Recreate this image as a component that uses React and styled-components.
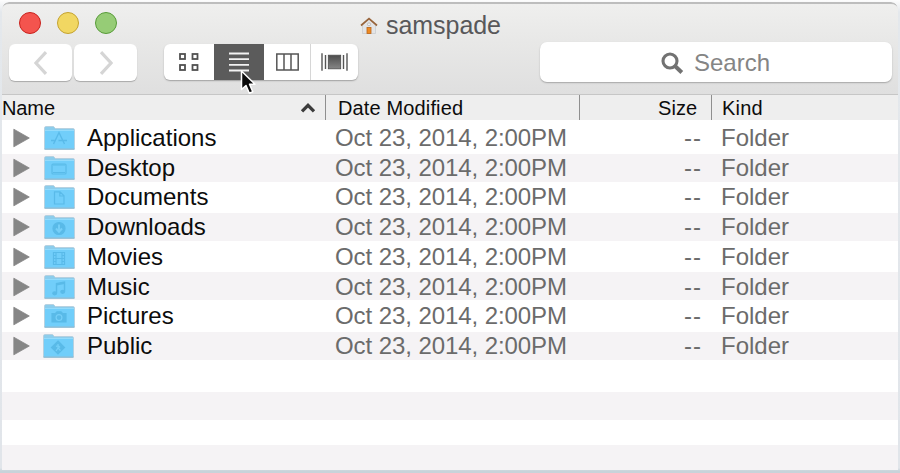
import React from 'react';
import styled, { createGlobalStyle } from 'styled-components';

const GlobalStyle = createGlobalStyle`
  * { box-sizing: border-box; }
  html, body { margin: 0; padding: 0; overflow: hidden; }
  body { background: #fff; }
  svg { display: block; flex: none; }
`;

const Page = styled.div`
  position: relative;
  width: 900px;
  height: 473px;
  padding: 2px 2px 0;
  overflow: hidden;
  background: linear-gradient(#fdfdfd 0, #e4e8ec 12px, #e1e5ea 468px, #c8d3da 471px);
  font-family: "Liberation Sans", Arial, Helvetica, sans-serif;
  color: #0c0c0c;
`;

const Window = styled.div`
  display: flex;
  flex-direction: column;
  height: 468px;
  border-radius: 7px 7px 0 0;
  overflow: hidden;
  background: #fff;
`;

const Chrome = styled.header`
  height: 93px;
  flex: none;
  border-top: 2px solid #bdbdbd;
  border-bottom: 1px solid #c6c6c6;
  border-radius: 7px 7px 0 0;
  background: linear-gradient(#efefee, #e9e9e8 35%, #dfdfdf);
`;

const TitleBar = styled.div`
  display: flex;
  height: 38px;
  padding: 8px 0 0 17px;
`;

const Lights = styled.div`
  display: flex;
  gap: 16px;
  width: 341px;
`;

const Light = styled.span`
  width: 22px;
  height: 22px;
  border-radius: 50%;
  background: ${(p) => p.$fill};
  border: 1.5px solid ${(p) => p.$edge};
`;

const Title = styled.div`
  display: flex;
  gap: 8px;
  font-size: 25px;
  line-height: 26px;
  letter-spacing: -0.05px;
  color: #58585a;
  svg { margin-top: 5px; }
`;

const Toolbar = styled.div`
  display: flex;
  align-items: flex-start;
  padding: 0 6px 0 7px;
`;

const NavButtons = styled.div`
  display: flex;
  gap: 2px;
  margin-top: 2px;
`;

const NavButton = styled.button`
  display: flex;
  align-items: center;
  justify-content: center;
  width: 63px;
  height: 37px;
  padding: 0;
  border: 0;
  border-radius: 6px;
  background: #fff;
  box-shadow: 0 1px 1px #a9a9a9;
`;

const ViewSwitch = styled.div`
  display: grid;
  grid-template-columns: 50px 50px 46px 48px;
  height: 36px;
  margin: 2px 182px 0 27px;
  border-radius: 6px;
  background: #fff;
  box-shadow: 0 1px 1.5px #a0a0a0;
`;

const ViewButton = styled.button`
  display: flex;
  align-items: center;
  justify-content: center;
  height: 36px;
  padding: 0;
  border: 0;
  border-left: ${(p) => (p.$divided ? '1px solid #d6d6d6' : '0')};
  background: ${(p) => (p.$active ? '#5b5b5b' : 'transparent')};
`;

const SearchField = styled.div`
  display: flex;
  align-items: center;
  gap: 10px;
  width: 352px;
  height: 40px;
  padding: 1px 0 0 121px;
  border-radius: 7px;
  background: #fff;
  box-shadow: 0 1px 1.5px #a6a6a6;
  font-size: 24px;
  color: #858585;
`;

const columns = '324px 254px 132px 1fr';

const ColumnHeads = styled.div`
  display: grid;
  grid-template-columns: ${columns};
  height: 25px;
  flex: none;
  background: #eee;
  font-size: 20px;
  line-height: 26px;
`;

const Head = styled.div`
  display: flex;
  justify-content: ${(p) => p.$justify || 'flex-start'};
  height: 26px;
  padding: ${(p) => p.$pad};
  border-right: ${(p) => (p.$last ? '0' : '1px solid #8f8f8f')};
  letter-spacing: ${(p) => p.$track || '0'};
`;

const Row = styled.div`
  display: grid;
  grid-template-columns: ${columns};
  flex: none;
  height: ${(p) => p.$height}px;
  padding-top: ${(p) => p.$top || 0}px;
  background: ${(p) => (p.$shaded ? '#f5f3f5' : '#fff')};
  font-size: 24px;
  line-height: 26px;
  white-space: nowrap;
`;

const NameCell = styled.div`
  display: flex;
  padding-left: 11px;
`;

const DisclosureSlot = styled.span`
  padding-top: 3px;
`;

const FolderSlot = styled.span`
  width: 31px;
  margin: 1px ${(p) => (p.$early ? 13 : 12)}px 0 ${(p) => (p.$early ? 12 : 13)}px;
`;

const Muted = styled.div`
  padding: ${(p) => p.$pad};
  text-align: ${(p) => p.$align || 'left'};
  letter-spacing: ${(p) => p.$track || '0'};
  color: #6b6b6b;
`;

const Pointer = styled.div`
  position: absolute;
  left: 240px;
  top: 69px;
`;

const glyphs = {
  apps: <path d="M9.5 18 L15 6.5 L20.5 18 M7 14.5 H12 M14.5 14.5 H23" strokeWidth="1.4" />,
  desktop: <><rect x="8" y="8" width="14" height="10" rx="1" /><path d="M9 16.5 H21 M9 9 H21" /></>,
  doc: <path d="M10.5 6.8 H16 L20 10.8 V19 H10.5 Z M15.8 7 V11 H20" />,
  down: <><circle cx="15" cy="13.5" r="6" fill="#49addc" /><path d="M15 9.5 V15 M12 13.5 L15 16.7 L18 13.5" stroke="#79d0f7" strokeWidth="2" /></>,
  movie: <path d="M9.5 7.5 H20.5 V19.5 H9.5 Z M12 7.5 V19.5 M18 7.5 V19.5 M12 13.5 H18 M9.5 10.5 H12 M9.5 13.5 H12 M9.5 16.5 H12 M18 10.5 H20.5 M18 13.5 H20.5 M18 16.5 H20.5" />,
  music: <><path d="M12.500 18 V8.500 L20.500 7 V16.500" strokeWidth="1.4" /><path d="M12.500 9.500 L20.500 8" strokeWidth="2" /><ellipse cx="10.700" cy="18.300" rx="1.900" ry="1.500" fill="#49addc" /><ellipse cx="18.700" cy="16.800" rx="1.900" ry="1.500" fill="#49addc" /></>,
  camera: <><path d="M8 9.5 H11.5 L13 7.8 H17 L18.5 9.5 H22 V18 H8 Z" fill="#49addc" /><circle cx="15" cy="13.6" r="2.9" stroke="#79d0f7" /></>,
  sign: <><path d="M15 7 L21.5 13.5 L15 20 L8.500 13.5 Z" fill="#49addc" /><path d="M15 10 V14 L13 17 M15 14 L17.5 16.5 M13 12.500 L15 11.500 L17 13.500" stroke="#79d0f7" /></>,
};

function Folder({ kind }) {
  return (
    <svg width="31" height="24" viewBox="0 0 31 24">
      <path d="M0.5 2 Q0.5 .5 2 .5 H9 Q10 .5 10.500 1.500 L11.200 2.500 H29 Q30.500 2.500 30.500 4 V23 H0.500 Z" fill="#8ccdec" stroke="#b0c9d8" strokeWidth=".7" />
      <path d="M1 4.800 H30 V22.500 H1 Z" fill="#71cefa" />
      <path d="M.5 23.200 H30.500" stroke="#7db3ce" strokeWidth="1" />
      <path d="M1 4.500 H30" stroke="#94dbfb" strokeWidth="1" />
      <g fill="none" stroke="#49addc" strokeWidth="1.200" opacity=".58">{glyphs[kind]}</g>
    </svg>
  );
}

function Disclosure() {
  return (
    <svg width="18" height="20" viewBox="0 0 18 20">
      <path d="M.8 1.200 L16.300 10 L.8 18.800 Z" fill="#868686" stroke="#868686" strokeWidth=".8" strokeLinejoin="round" />
    </svg>
  );
}

function House() {
  return (
    <svg width="18" height="18" viewBox="0 0 18 18">
      <path d="M2.500 7.500 L9 2 L15.500 7.500 V16.500 H2.500 Z" fill="#e3e4e6" stroke="#c6c8cc" strokeWidth=".7" />
      <path d="M1 8.500 L9 1.700 L17 8.500" fill="none" stroke="#98653c" strokeWidth="1.700" />
      <circle cx="9" cy="7.300" r="1.500" fill="#f4f4f4" stroke="#aaa" strokeWidth=".7" />
      <rect x="7" y="10.500" width="4" height="6" fill="#ee8a22" stroke="#b8641a" strokeWidth=".8" />
    </svg>
  );
}

function Chevron({ d }) {
  return (
    <svg width="14" height="24" viewBox="0 0 14 24">
      <path d={d} fill="none" stroke="#d5d5d5" strokeWidth="3.200" />
    </svg>
  );
}

function GridIcon() {
  return (
    <svg width="20" height="18" viewBox="0 0 20 18" fill="none" stroke="#505050" strokeWidth="1.800">
      <rect x="1" y="1" width="5" height="5" /><rect x="13.500" y="1" width="5" height="5" />
      <rect x="1" y="12" width="5" height="5" /><rect x="13.500" y="12" width="5" height="5" />
    </svg>
  );
}

function ListIcon() {
  return (
    <svg width="20" height="20" viewBox="0 0 20 20">
      <path d="M0 1.500 H20 M0 7.200 H20 M0 12.900 H20 M0 18.500 H20" stroke="#f2f2f2" strokeWidth="1.800" />
    </svg>
  );
}

function ColumnsIcon() {
  return (
    <svg width="23" height="18" viewBox="0 0 23 18">
      <path d="M.8 1 H22.200 V17 H.8 Z M8 1 V17 M15 1 V17" fill="none" stroke="#555" strokeWidth="1.500" />
    </svg>
  );
}

function FlowIcon() {
  return (
    <svg width="27" height="18" viewBox="0 0 27 18">
      <defs>
        <linearGradient id="flow" x1="0" y1="0" x2="0" y2="1">
          <stop offset="0" stopColor="#4c4c4c" /><stop offset="1" stopColor="#868686" />
        </linearGradient>
      </defs>
      <rect x="7.300" y="2.200" width="12.400" height="13.600" fill="url(#flow)" stroke="#4d4d4d" strokeWidth=".8" />
      <path d="M1 .3 V17.700 M26 .3 V17.700 M4.500 2 V16 M22.500 2 V16" stroke="#555" strokeWidth="1.400" />
    </svg>
  );
}

function Magnifier() {
  return (
    <svg width="23" height="22" viewBox="0 0 23 22">
      <circle cx="9" cy="9" r="7" fill="none" stroke="#727272" strokeWidth="3.100" />
      <path d="M14 14 L20.800 20.500" stroke="#727272" strokeWidth="4" />
    </svg>
  );
}

function SortUp() {
  return (
    <svg width="16" height="12" viewBox="0 0 16 12">
      <path d="M2 9.300 L8 3.300 L14 9.300" fill="none" stroke="#3c3c3c" strokeWidth="3.300" />
    </svg>
  );
}

const HeadName = styled.span`
  flex: 1;
`;

const SortMark = styled.span`
  padding-top: 7px;
`;

const folders = [
  { name: 'Applications', kind: 'apps', height: 34, top: 5 },
  { name: 'Desktop', kind: 'desktop', height: 28, top: 1 },
  { name: 'Documents', kind: 'doc', height: 31, top: 2 },
  { name: 'Downloads', kind: 'down', height: 28, top: 1 },
  { name: 'Movies', kind: 'movie', height: 31, top: 3 },
  { name: 'Music', kind: 'music', height: 28, top: 2 },
  { name: 'Pictures', kind: 'camera', height: 32, top: 3 },
  { name: 'Public', kind: 'sign', height: 28, top: 1 },
];

const emptyRows = [32, 28, 25, 25];

export default function App() {
  return (
    <>
      <GlobalStyle />
      <Page>
        <Window>
          <Chrome>
            <TitleBar>
              <Lights>
                <Light $fill="#f4544e" $edge="#c9211c" />
                <Light $fill="#f1d762" $edge="#c5a32f" />
                <Light $fill="#96cc76" $edge="#579b38" />
              </Lights>
              <Title><House />samspade</Title>
            </TitleBar>
            <Toolbar>
              <NavButtons>
                <NavButton aria-label="Back"><Chevron d="M12 1.200 L2 12 L12 22.800" /></NavButton>
                <NavButton aria-label="Forward"><Chevron d="M2 1.200 L12 12 L2 22.800" /></NavButton>
              </NavButtons>
              <ViewSwitch>
                <ViewButton aria-label="Icons"><GridIcon /></ViewButton>
                <ViewButton aria-label="List" $active><ListIcon /></ViewButton>
                <ViewButton aria-label="Columns"><ColumnsIcon /></ViewButton>
                <ViewButton aria-label="Cover flow" $divided><FlowIcon /></ViewButton>
              </ViewSwitch>
              <SearchField><Magnifier />Search</SearchField>
            </Toolbar>
          </Chrome>
          <ColumnHeads>
            <Head $pad="0 9px 0 0" $track="-0.1px">
              <HeadName>Name</HeadName>
              <SortMark><SortUp /></SortMark>
            </Head>
            <Head $pad="0 0 0 12px" $track="0.14px">Date Modified</Head>
            <Head $pad="0 14px 0 0" $justify="flex-end">Size</Head>
            <Head $pad="0 0 0 10px" $track="0.2px" $last>Kind</Head>
          </ColumnHeads>
          {folders.map((f, i) => (
            <Row key={f.name} $height={f.height} $top={f.top} $shaded={i % 2 === 1}>
              <NameCell>
                <DisclosureSlot><Disclosure /></DisclosureSlot>
                <FolderSlot $early={f.kind === 'sign'}><Folder kind={f.kind} /></FolderSlot>
                <span>{f.name}</span>
              </NameCell>
              <Muted $pad="0 0 0 9px" $track="-0.08px">Oct 23, 2014, 2:00PM</Muted>
              <Muted $pad="0 10px 0 0" $align="right" $track="1px">--</Muted>
              <Muted $pad="0 0 0 9px">Folder</Muted>
            </Row>
          ))}
          {emptyRows.map((height, i) => (
            <Row key={i} $height={height} $shaded={i % 2 === 1} />
          ))}
        </Window>
        <Pointer>
          <svg width="17" height="27" viewBox="0 0 17 27">
            <path d="M1.500 2 V20.500 L6 16.500 L9.300 24.300 L12.800 22.800 L9.500 15.300 H15 Z" fill="#0b0b0b" stroke="#fff" strokeWidth="1.500" strokeLinejoin="round" />
          </svg>
        </Pointer>
      </Page>
    </>
  );
}
